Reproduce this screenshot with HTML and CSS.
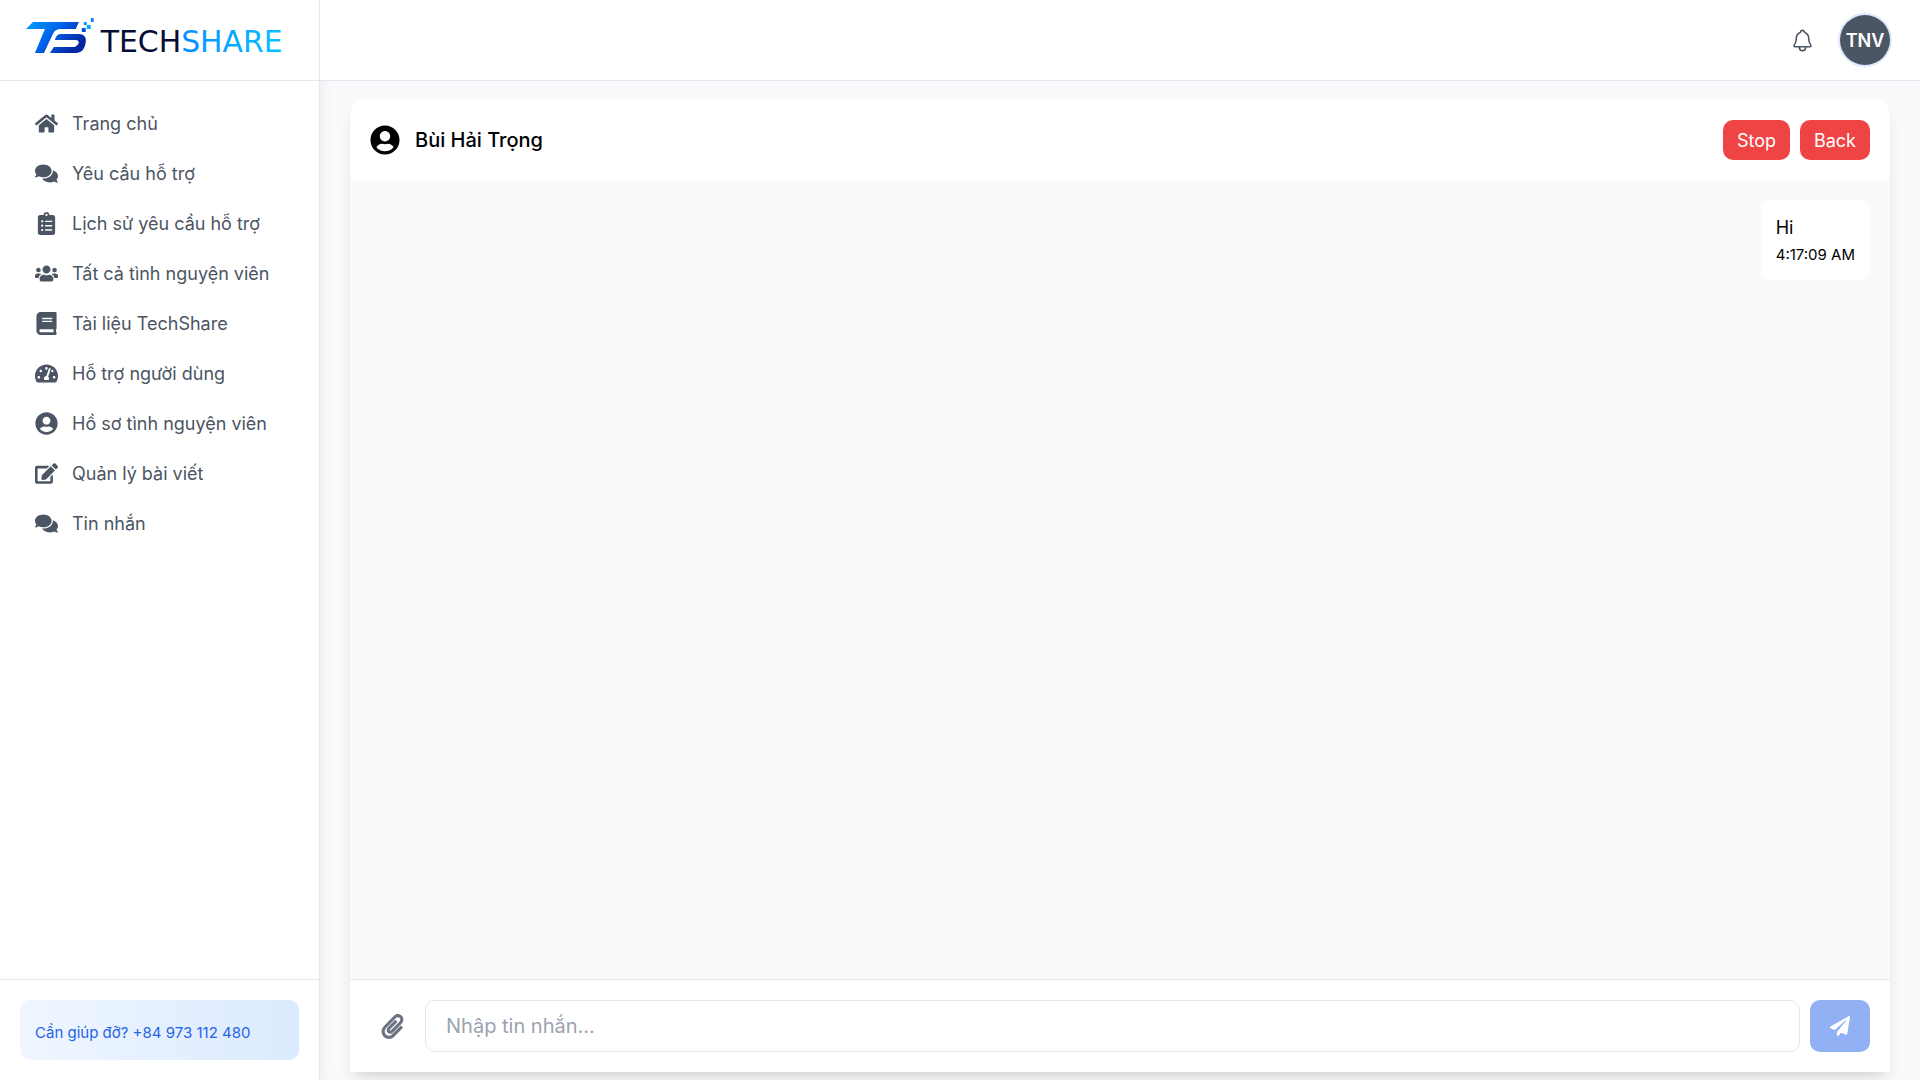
FILE: index.html
```html
<!DOCTYPE html>
<html lang="vi">
<head>
<meta charset="UTF-8" />
<meta name="viewport" content="width=device-width, initial-scale=1" />
<title>TechShare - Tin nhắn</title>
<link rel="stylesheet" href="styles.css">
</head>
<body>

<aside class="sidebar">
  <a class="brand" href="#" aria-label="TechShare">
    <svg class="logo" viewBox="0 0 270 50" aria-hidden="true">
      <defs>
        <linearGradient id="markFill" x1="0" y1="0" x2="1" y2="0.5">
          <stop offset="0" stop-color="#00a2ff" />
          <stop offset="0.5" stop-color="#0062ea" />
          <stop offset="1" stop-color="#0526a0" />
        </linearGradient>
        <linearGradient id="wordFill" x1="0" y1="0" x2="1" y2="0">
          <stop offset="0" stop-color="#0562ff" />
          <stop offset="1" stop-color="#04c3ff" />
        </linearGradient>
      </defs>
      <path fill="url(#markFill)" d="M8 7H54L51 14H36Q30 14 28 19L19 38H10L20 14H1ZM35 19H55Q62 20 61 27Q60 37 52 38H25L29 32H50Q53 31 54 28Q54 25 51 25H30Q31 20 35 19Z" />
      <path fill="#2b7bff" d="M66 3h3v4h-3z" />
      <path fill="#0a8cff" d="M59 7h3v3h-3z" />
      <path fill="#00aaff" d="M62 10h4v4h-4z" />
      <path fill="#0050e0" d="M57 13h4v4h-4z" />
      <text class="logo-text" x="76" y="37" fill="#050c36">TECH<tspan fill="url(#wordFill)">SHARE</tspan></text>
    </svg>
  </a>

  <nav class="menu">
    <a href="#">
      <svg viewBox="0 0 576 512"><path d="M280.37 148.26L96 300.11V464a16 16 0 0 0 16 16l112.06-.29a16 16 0 0 0 15.92-16V368a16 16 0 0 1 16-16h64a16 16 0 0 1 16 16v95.64a16 16 0 0 0 16 16.05L464 480a16 16 0 0 0 16-16V300L295.67 148.26a12.19 12.19 0 0 0-15.3 0zM571.6 251.47L488 182.56V44.05a12 12 0 0 0-12-12h-56a12 12 0 0 0-12 12v72.61L318.47 43a48 48 0 0 0-61 0L4.34 251.47a12 12 0 0 0-1.6 16.9l25.5 31A12 12 0 0 0 45.15 301l235.22-193.74a12.19 12.19 0 0 1 15.3 0L530.9 301a12 12 0 0 0 16.9-1.6l25.5-31a12 12 0 0 0-1.7-16.93z" /></svg>
      Trang chủ
    </a>
    <a href="#">
      <svg viewBox="0 0 576 512"><path id="comments" d="M416 192c0-88.4-93.1-160-208-160S0 103.6 0 192c0 34.3 14.1 65.9 38 92-13.4 30.2-35.5 54.2-35.8 54.5-2.2 2.3-2.8 5.7-1.5 8.7S4.8 352 8 352c36.6 0 66.9-12.3 88.7-25 32.2 15.7 70.3 25 111.3 25 114.9 0 208-71.6 208-160zm122 220c23.9-26 38-57.7 38-92 0-66.9-53.5-124.2-129.3-148.1.9 6.6 1.3 13.3 1.3 20.1 0 105.9-107.7 192-240 192-10.8 0-21.3-.8-31.7-1.9C207.8 439.6 281.8 480 368 480c41 0 79.1-9.2 111.3-25 21.8 12.7 52.1 25 88.7 25 3.2 0 6.1-1.9 7.3-4.8 1.3-2.9.7-6.3-1.5-8.7-.3-.3-22.4-24.2-35.8-54.5z" /></svg>
      Yêu cầu hỗ trợ
    </a>
    <a href="#">
      <svg viewBox="0 0 384 512"><path d="M336 64h-80c0-35.3-28.7-64-64-64s-64 28.7-64 64H48C21.5 64 0 85.5 0 112v352c0 26.5 21.5 48 48 48h288c26.5 0 48-21.5 48-48V112c0-26.5-21.5-48-48-48zM96 424c-13.3 0-24-10.7-24-24s10.7-24 24-24 24 10.7 24 24-10.7 24-24 24zm0-96c-13.3 0-24-10.7-24-24s10.7-24 24-24 24 10.7 24 24-10.7 24-24 24zm0-96c-13.3 0-24-10.7-24-24s10.7-24 24-24 24 10.7 24 24-10.7 24-24 24zm96-192c13.3 0 24 10.7 24 24s-10.7 24-24 24-24-10.7-24-24 10.7-24 24-24zm128 368c0 4.4-3.6 8-8 8H168c-4.4 0-8-3.6-8-8v-16c0-4.4 3.6-8 8-8h144c4.4 0 8 3.6 8 8v16zm0-96c0 4.4-3.6 8-8 8H168c-4.4 0-8-3.6-8-8v-16c0-4.4 3.6-8 8-8h144c4.4 0 8 3.6 8 8v16zm0-96c0 4.4-3.6 8-8 8H168c-4.4 0-8-3.6-8-8v-16c0-4.4 3.6-8 8-8h144c4.4 0 8 3.6 8 8v16z" /></svg>
      Lịch sử yêu cầu hỗ trợ
    </a>
    <a href="#">
      <svg viewBox="0 0 640 512"><path d="M96 224c35.3 0 64-28.7 64-64s-28.7-64-64-64-64 28.7-64 64 28.7 64 64 64zm448 0c35.3 0 64-28.7 64-64s-28.7-64-64-64-64 28.7-64 64 28.7 64 64 64zm32 32h-64c-17.6 0-33.5 7.1-45.1 18.6 40.3 22.1 68.9 62 75.1 109.4h66c17.7 0 32-14.3 32-32v-32c0-35.3-28.7-64-64-64zm-256 0c61.9 0 112-50.1 112-112S381.9 32 320 32 208 82.1 208 144s50.1 112 112 112zm76.8 32h-8.3c-20.8 10-43.9 16-68.5 16s-47.6-6-68.5-16h-8.3C179.6 288 128 339.6 128 403.2V432c0 26.5 21.5 48 48 48h288c26.5 0 48-21.5 48-48v-28.8c0-63.6-51.6-115.2-115.2-115.2zm-223.7-13.4C161.5 263.1 145.6 256 128 256H64c-35.3 0-64 28.7-64 64v32c0 17.7 14.3 32 32 32h65.9c6.3-47.4 34.9-87.3 75.2-109.4z" /></svg>
      Tất cả tình nguyện viên
    </a>
    <a href="#">
      <svg viewBox="0 0 448 512"><path d="M448 360V24c0-13.3-10.7-24-24-24H96C43 0 0 43 0 96v320c0 53 43 96 96 96h328c13.3 0 24-10.7 24-24v-16c0-7.5-3.5-14.3-8.9-18.7-4.2-15.4-4.2-59.3 0-74.7 5.4-4.3 8.9-11.1 8.9-18.6zM128 134c0-3.3 2.7-6 6-6h212c3.3 0 6 2.7 6 6v20c0 3.3-2.7 6-6 6H134c-3.3 0-6-2.7-6-6v-20zm0 64c0-3.3 2.7-6 6-6h212c3.3 0 6 2.7 6 6v20c0 3.3-2.7 6-6 6H134c-3.3 0-6-2.7-6-6v-20zm253.4 250H96c-17.7 0-32-14.3-32-32 0-17.6 14.4-32 32-32h285.4c-1.9 17.1-1.9 46.9 0 64z" /></svg>
      Tài liệu TechShare
    </a>
    <a href="#">
      <svg viewBox="0 0 576 512"><path d="M288 32C128.94 32 0 160.94 0 320c0 52.8 14.25 102.26 39.06 144.8 5.61 9.62 16.3 15.2 27.44 15.2h443c11.14 0 21.83-5.58 27.44-15.2C561.75 422.26 576 372.8 576 320c0-159.06-128.94-288-288-288zm0 64c14.71 0 26.58 10.13 30.32 23.65-1.11 2.26-2.64 4.23-3.45 6.67l-9.22 27.67c-5.13 3.49-10.97 6.01-17.64 6.01-17.67 0-32-14.33-32-32S270.33 96 288 96zM96 384c-17.67 0-32-14.33-32-32s14.33-32 32-32 32 14.33 32 32-14.33 32-32 32zm48-160c-17.67 0-32-14.33-32-32s14.33-32 32-32 32 14.33 32 32-14.33 32-32 32zm246.77-72.41l-61.33 184C343.13 347.33 352 364.54 352 384c0 11.72-3.38 22.55-8.88 32H232.88c-5.5-9.45-8.88-20.28-8.88-32 0-33.94 26.5-61.43 59.9-63.59l61.34-184.01c4.17-12.56 17.73-19.45 30.36-15.17 12.57 4.19 19.35 17.79 15.17 30.36zm14.66 57.2l15.52-46.55c3.47-1.29 7.13-2.23 11.05-2.23 17.67 0 32 14.33 32 32s-14.33 32-32 32c-11.38-.01-21.25-6.1-26.57-15.22zM480 384c-17.67 0-32-14.33-32-32s14.33-32 32-32 32 14.33 32 32-14.33 32-32 32z" /></svg>
      Hỗ trợ người dùng
    </a>
    <a href="#">
      <svg viewBox="0 0 496 512"><path id="user" d="M248 8C111 8 0 119 0 256s111 248 248 248 248-111 248-248S385 8 248 8zm0 96c48.6 0 88 39.4 88 88s-39.4 88-88 88-88-39.4-88-88 39.4-88 88-88zm0 344c-58.7 0-111.3-26.6-146.5-68.2 18.8-35.4 55.6-59.8 98.5-59.8 2.4 0 4.8.4 7.1 1.1 13 4.2 26.6 6.9 40.9 6.9 14.3 0 28-2.7 40.9-6.9 2.3-.7 4.7-1.1 7.1-1.1 42.9 0 79.7 24.4 98.5 59.8C359.3 421.4 306.7 448 248 448z" /></svg>
      Hồ sơ tình nguyện viên
    </a>
    <a href="#">
      <svg viewBox="0 0 576 512"><path d="M402.6 83.2l90.2 90.2c3.8 3.8 3.8 10 0 13.8L274.4 405.6l-92.8 10.3c-12.4 1.4-22.9-9.1-21.5-21.5l10.3-92.8L388.8 83.2c3.8-3.8 10-3.8 13.8 0zm162-22.9l-48.8-48.8c-15.2-15.2-39.9-15.2-55.2 0l-35.4 35.4c-3.8 3.8-3.8 10 0 13.8l90.2 90.2c3.8 3.8 10 3.8 13.8 0l35.4-35.4c15.2-15.3 15.2-40 0-55.2zM384 346.2V448H64V128h229.8c3.2 0 6.2-1.3 8.5-3.5l40-40c7.6-7.6 2.2-20.5-8.5-20.5H48C21.5 64 0 85.5 0 112v352c0 26.5 21.5 48 48 48h352c26.5 0 48-21.5 48-48V306.2c0-10.7-12.9-16-20.5-8.5l-40 40c-2.2 2.3-3.5 5.3-3.5 8.5z" /></svg>
      Quản lý bài viết
    </a>
    <a href="#">
      <svg viewBox="0 0 576 512"><use href="#comments" /></svg>
      Tin nhắn
    </a>
  </nav>

  <div class="help">
    <a href="tel:+84973112480">Cần giúp đỡ? +84 973 112 480</a>
  </div>
</aside>

<div class="page">
  <header class="topbar">
    <button class="bell" type="button" aria-label="Thông báo">
      <svg viewBox="0 0 512 512"><path d="M427.68 351.43C402 320 383.87 304 383.87 217.35 383.87 138 343.35 109.73 310 96c-4.43-1.82-8.6-6-9.95-10.55C294.2 65.54 277.8 48 256 48s-38.21 17.55-44 37.47c-1.35 4.6-5.52 8.71-9.95 10.53-33.39 13.75-73.87 41.92-73.87 121.35C128.13 304 110 320 84.32 351.43 73.68 364.45 83 384 101.61 384h308.88c18.51 0 27.77-19.61 17.19-32.57zM320 384v16a64 64 0 01-128 0v-16" /></svg>
    </button>
    <button class="avatar" type="button">TNV</button>
  </header>

  <main>
    <section class="chat">
      <div class="chat-header">
        <svg viewBox="0 0 496 512"><use href="#user" /></svg>
        <h1>Bùi Hải Trọng</h1>
        <button class="btn" type="button">Stop</button>
        <button class="btn" type="button">Back</button>
      </div>

      <div class="messages">
        <div class="message">
          <p>Hi</p>
          <time>4:17:09 AM</time>
        </div>
      </div>

      <form class="composer">
        <button class="attach" type="button" aria-label="Đính kèm tệp">
          <svg viewBox="0 0 448 512"><path d="M43.246 466.142c-58.43-60.289-57.341-157.511 1.386-217.581L254.392 34c44.316-45.332 116.351-45.336 160.671 0 43.89 44.894 43.943 117.329 0 162.276L232.214 383.128c-29.855 30.537-78.633 30.111-107.982-.998-28.275-29.97-27.368-77.473 1.452-106.953l143.743-146.835c6.182-6.314 16.312-6.422 22.626-.241l22.861 22.379c6.315 6.182 6.422 16.312.241 22.626L171.427 319.927c-4.932 5.045-5.236 13.428-.648 18.292 4.372 4.634 11.245 4.711 15.688.165l182.849-186.851c19.613-20.062 19.613-52.725-.011-72.798-19.189-19.627-49.957-19.637-69.154 0L90.39 293.295c-34.763 35.56-35.299 93.12-1.191 128.313 34.01 35.093 88.985 35.137 123.058.286l172.06-175.999c6.177-6.319 16.307-6.433 22.626-.256l22.877 22.364c6.319 6.177 6.434 16.307.256 22.626l-172.06 175.998c-59.576 60.938-155.943 60.216-214.77-.485z" /></svg>
        </button>
        <input type="text" placeholder="Nhập tin nhắn..." aria-label="Nhập tin nhắn" />
        <button class="send" type="submit" aria-label="Gửi" disabled>
          <svg viewBox="0 0 512 512"><path d="M476 3.2L12.5 270.6c-18.1 10.4-15.8 35.6 2.2 43.2L121 358.4l287.3-253.2c5.5-4.9 13.3 2.6 8.6 8.3L176 407v80.5c0 23.6 28.5 32.9 42.5 15.8L282 426l124.6 52.2c14.2 6 30.4-2.9 33-18.2l72-432C515 7.8 493.3-6.8 476 3.2z" /></svg>
        </button>
      </form>
    </section>
  </main>
</div>

</body>
</html>
```
FILE: styles.css
```css
* {
  box-sizing: border-box;
}
body {
  margin: 0;
  height: 100vh;
  display: flex;
  font-family: Inter, "Noto Sans", sans-serif;
  font-size: 18px;
  line-height: 25px;
  color: #000;
  background: #f8fafc;
}
button, input {
  font: inherit;
  border: none;
}
button {
  cursor: pointer;
  padding: 0;
}
a {
  text-decoration: none;
}
svg {
  fill: currentColor;
  display: block;
}

/* Sidebar */
.sidebar {
  width: 320px;
  flex-shrink: 0;
  display: flex;
  flex-direction: column;
  background: #fff;
  border-right: 1px solid #e5e7eb;
  box-shadow: 0 12px 20px -4px rgba(0, 0, 0, 0.1), 0 5px 8px -5px rgba(0, 0, 0, 0.1);
}
.brand {
  height: 81px;
  display: flex;
  align-items: center;
  padding: 0 25px;
  border-bottom: 1px solid #e5e7eb;
}
.logo {
  width: 270px;
  height: 50px;
}
.logo-text {
  font-family: "DejaVu Sans", sans-serif;
  font-size: 30px;
}
.menu {
  flex: 1;
  padding: 17px 20px;
}
.menu a {
  display: flex;
  align-items: center;
  gap: 14px;
  height: 50px;
  padding: 0 15px;
  color: #4b5563;
}
.menu svg {
  width: 23px;
  height: 23px;
}
.help {
  padding: 20px;
  border-top: 1px solid #e5e7eb;
}
.help a {
  display: flex;
  align-items: center;
  height: 60px;
  padding: 4px 15px 0;
  border-radius: 10px;
  background: linear-gradient(to right, #eff6ff, #dbeafe);
  color: #2563eb;
  font-size: 15px;
}

/* Page */
.page {
  flex: 1;
  min-width: 0;
  display: flex;
  flex-direction: column;
}
.topbar {
  height: 81px;
  display: flex;
  align-items: center;
  justify-content: flex-end;
  gap: 25px;
  padding: 0 30px;
  background: #fff;
  border-bottom: 1px solid #e5e7eb;
}
.bell {
  background: none;
  color: #4b5563;
}
.bell svg {
  width: 25px;
  height: 25px;
  fill: none;
  stroke: currentColor;
  stroke-width: 32;
  stroke-linecap: round;
  stroke-linejoin: round;
}
.avatar {
  width: 50px;
  height: 50px;
  border-radius: 50%;
  background: #4b5563;
  color: #fff;
  font-weight: 600;
  box-shadow: 0 0 0 2px #dbeafe;
}
main {
  flex: 1;
  min-height: 0;
  display: flex;
  padding: 19px 30px 8px;
}

/* Chat */
.chat {
  flex: 1;
  display: flex;
  flex-direction: column;
  background: #fff;
  border-radius: 15px 15px 0 0;
  box-shadow: 0 12px 20px -4px rgba(0, 0, 0, 0.1), 0 5px 8px -5px rgba(0, 0, 0, 0.1);
}
.chat-header {
  display: flex;
  align-items: center;
  gap: 10px;
  padding: 20px;
}
.chat-header svg {
  width: 30px;
  height: 30px;
}
.chat-header h1 {
  flex: 1;
  margin: 0 5px;
  font-size: 20px;
  font-weight: 500;
}
.btn {
  padding: 8px 14px 7px;
  border-radius: 10px;
  background: #ef4444;
  color: #fff;
}
.messages {
  flex: 1;
  padding: 20px;
  background: #f9fafb;
}
.message {
  width: fit-content;
  margin-left: auto;
  padding: 15px;
  border-radius: 10px;
  background: #fff;
}
.message p {
  margin: 0 0 5px;
}
.message time {
  display: block;
  font-size: 15px;
  line-height: 20px;
}
.composer {
  display: flex;
  gap: 10px;
  padding: 20px;
  border-top: 1px solid #e5e7eb;
}
.attach {
  padding: 0 10px;
  background: none;
  color: #6b7280;
}
.attach svg {
  width: 25px;
  height: 25px;
}
.composer input {
  flex: 1;
  min-width: 0;
  height: 52px;
  padding: 0 20px;
  border: 1px solid #e5e7eb;
  border-radius: 10px;
  background: #fff;
  font-size: 20px;
}
.composer input::placeholder {
  color: #9ca3af;
}
.send {
  width: 60px;
  border-radius: 10px;
  background: #92b1f5;
  color: #fff;
}
.send svg {
  width: 20px;
  height: 20px;
  margin: 0 auto;
}
```
